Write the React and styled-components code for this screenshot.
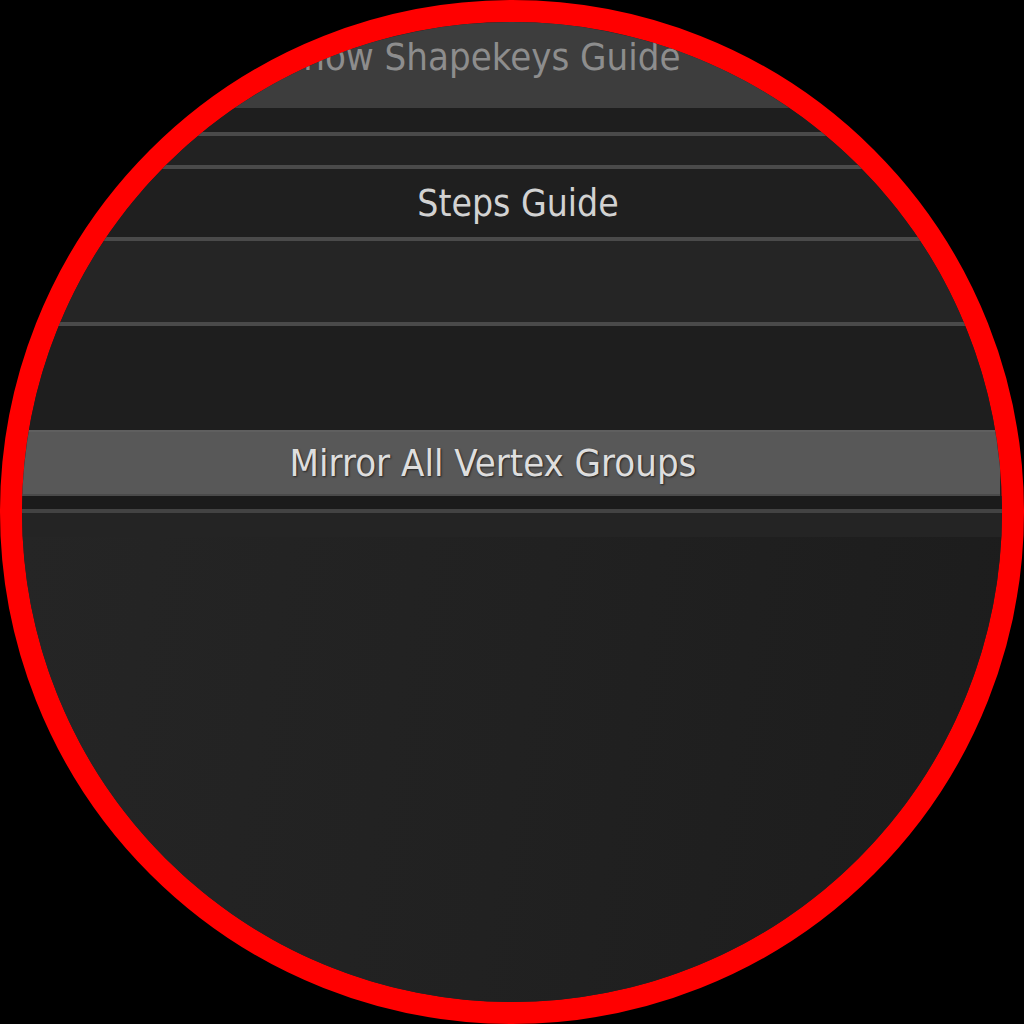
import { createGlobalStyle, styled } from "styled-components";

const GlobalStyle = createGlobalStyle`
  html, body {
    margin: 0;
    padding: 0;
    background: #000;
  }
`;

export default function App() {
  return (
    <>
      <GlobalStyle />
      <Page>
        <Lens>
          <Panel>
            <TopButton>Show Shapekeys Guide</TopButton>
            <Band $h={24} $bg="#1e1e1e" />
            <Divider />
            <Band $h={29} $bg="#222222" />
            <Divider />
            <Row $h={68} $bg="#1f1f1f" $shift={12}>
              Steps Guide
            </Row>
            <Divider />
            <Band $h={81} $bg="#252525" />
            <Divider />
            <Band $h={104} $bg="#1e1e1e" />
            <MirrorButton>Mirror All Vertex Groups</MirrorButton>
            <Band $h={13} $bg="#1b1b1b" />
            <Divider $color="#434343" />
            <Band $h={24} $bg="#242424" />
            <Empty />
          </Panel>
        </Lens>
      </Page>
    </>
  );
}

const Page = styled.div`
  width: 1024px;
  height: 1024px;
  background: #000;
`;

const Lens = styled.div`
  box-sizing: border-box;
  width: 1024px;
  height: 1024px;
  border: 22px solid #ff0000;
  border-radius: 50%;
  overflow: hidden;
  background: #212121;
`;

const Panel = styled.div`
  display: flex;
  flex-direction: column;
  height: 100%;
  font-family: "DejaVu Sans Condensed", "DejaVu Sans", sans-serif;
  font-stretch: semi-condensed;
  font-size: 37px;
`;

const TopButton = styled.div`
  flex: 0 0 86px;
  display: flex;
  align-items: center;
  justify-content: center;
  box-sizing: border-box;
  padding: 0 62px 16px 0;
  font-size: 38px;
  background: #3d3d3d;
  color: #8d8d8d;
`;

const Band = styled.div`
  flex: 0 0 ${(p) => p.$h}px;
  background: ${(p) => p.$bg};
`;

const Divider = styled.div`
  flex: 0 0 4px;
  background: ${(p) => p.$color || "#4a4a4a"};
`;

const Row = styled.div`
  flex: 0 0 ${(p) => p.$h}px;
  display: flex;
  align-items: center;
  justify-content: center;
  padding-left: ${(p) => p.$shift}px;
  background: ${(p) => p.$bg};
  color: #d2d2d2;
`;

const MirrorButton = styled.div`
  flex: 0 0 66px;
  display: flex;
  align-items: center;
  justify-content: center;
  box-sizing: border-box;
  margin-right: 2px;
  padding-right: 36px;
  font-size: 38px;
  background: #585858;
  border-top: 2px solid #5f5f5f;
  border-bottom: 2px solid #4a4a4a;
  color: #dedede;
  text-shadow: 1px 1px 2px rgba(0, 0, 0, 0.6);
`;

const Empty = styled.div`
  flex: 1;
  background: linear-gradient(100deg, #252525 0%, #212121 50%, #1c1c1c 100%);
`;
